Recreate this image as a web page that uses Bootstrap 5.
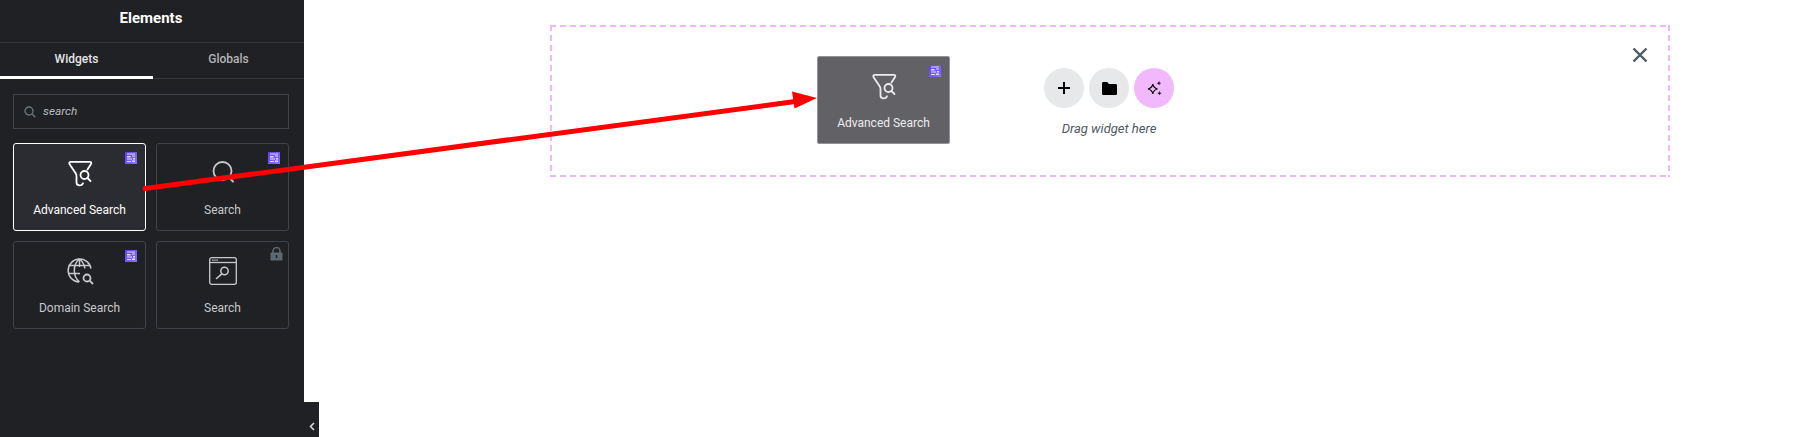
<!DOCTYPE html>
<html lang="en">
<head>
<meta charset="utf-8">
<title>Elements</title>
<link href="https://cdn.jsdelivr.net/npm/bootstrap@5.3.0/dist/css/bootstrap.min.css" rel="stylesheet">
<style>
html,body{height:437px;overflow:hidden;background:#fff}
body{font-family:Roboto,"Liberation Sans",sans-serif;position:relative}
.side{width:304px;height:437px;background:#1f2124;flex:none;position:relative}
.side-title{height:43px;border-bottom:1px solid #33363a;color:#fff;font-size:15px;font-weight:700;line-height:36px;text-align:center;padding-right:2px}
.side-tabs{height:36px;border-bottom:1px solid #33363a}
.side-tab{flex:1 1 0;font-size:12px;font-weight:500;color:#b4b5b7;text-align:center;line-height:32px;height:36px}
.side-tab.on{flex:none;width:153px;color:#e6e6e7;border-bottom:3px solid #fff}
.side-body{padding:15px 15px 0 13px}
.searchbox{height:35px;margin-bottom:-1px;border:1px solid #3f444b;padding-left:10px;gap:7px;color:#babbbd;font-size:11.800px;font-style:italic}
.grid-cards{display:grid;grid-template-columns:133px 133px;gap:10px;margin-top:15px}
.wcard{height:88px;border:1px solid #3f444b;border-radius:3px;color:#c8c9cb;font-size:12px;position:relative;text-align:center;padding-top:15px}
.wcard.sel{border-color:#fff;background:#2b2c31;color:#fff}
.wcard svg.ico{display:block;margin:0 auto}
.wcard .lbl{position:absolute;left:0;right:0;top:58px;line-height:16px}
.prob{position:absolute;top:8px;right:8px;width:12px;height:12px;display:block}
.lockico{position:absolute;top:5px;right:5px}
.fold{position:absolute;left:304px;top:402px;width:15px;height:35px;background:#1f2124}
.fold svg{position:absolute;left:5px;top:20px}
.canvas{flex:1 1 auto;padding:25px 130px 0 246px;position:relative}
.dropzone{width:1120px;height:152px;position:relative;background-image:linear-gradient(90deg,#f0b6fb 6px,transparent 6px),linear-gradient(90deg,#f0b6fb 6px,transparent 6px),linear-gradient(#f0b6fb 6px,transparent 6px),linear-gradient(#f0b6fb 6px,transparent 6px);background-size:10px 2px,10px 2px,2px 10px,2px 10px;background-repeat:repeat-x,repeat-x,repeat-y,repeat-y;background-position:0 0,0 100%,0 0,100% 0;padding:31px 0 0 267px}
.ghost{width:133px;height:88px;flex:none;background:#626166;border:1px solid #96959a;border-radius:2px;color:#ececed;padding-top:15px}
.ghost .lbl{top:58px}
.holder{margin-left:94px;width:130px;padding-top:12px;text-align:center}
.holder-row{gap:5px}
.round{width:40px;height:40px;border-radius:50%;background:#e6e8ea}
.round.pink{background:#f2b8fc}
.hint{font-size:13px;font-style:italic;color:#515962;margin-top:13px;line-height:16px;margin-left:-5px;margin-right:-5px}
.closer{position:absolute;left:1082px;top:22px}
.arrow{position:absolute;left:0;top:0;pointer-events:none}
</style>
</head>
<body>
<svg width="0" height="0" class="position-absolute">
<defs>
<linearGradient id="pg" x1="0" y1="0" x2="1" y2="1"><stop offset="0" stop-color="#5f3df5"/><stop offset="1" stop-color="#8a72ff"/></linearGradient>
<symbol id="probadge" viewBox="0 0 12 12">
<rect width="12" height="12" fill="url(#pg)"/>
<path d="M2 1.500h8v1H2zM2 4h3.500v1.500H2zM7 3.500h3v1H7zM2 6.500h5v1H2zM8 6h2v1.500H8zM2 9h4v1H2zM7 8.500h3v1.500H7z" fill="#e4deff"/>
</symbol>
<symbol id="funnel" viewBox="0 0 26 28">
<path d="M20.500 10.500L24 5c.7-1.200.2-2.200-1.200-2.200H4C2.500 2.800 1.800 4 2.600 5.200L8.500 14c.7 1 1 2 1 3v6.500c0 3.500 5 3.800 6.500.8" fill="none" stroke="currentColor" stroke-width="1.800" stroke-linecap="round"/>
<circle cx="17.500" cy="16" r="4" fill="none" stroke="currentColor" stroke-width="1.800"/>
<path d="M20.500 19l3 3" stroke="currentColor" stroke-width="1.800" stroke-linecap="round"/>
</symbol>
</defs>
</svg>
<div class="d-flex">
<aside class="side">
<div class="side-title">Elements</div>
<div class="side-tabs d-flex">
<div class="side-tab on">Widgets</div>
<div class="side-tab">Globals</div>
</div>
<div class="side-body">
<div class="searchbox d-flex align-items-center">
<svg width="12" height="12" viewBox="0 0 12 12" fill="none" stroke="#6d7882" stroke-width="1.300"><circle cx="5" cy="5" r="4"/><path d="M8 8l3.300 3.300"/></svg>
<span>search</span>
</div>
<div class="grid-cards">
<div class="wcard sel">
<svg class="prob"><use href="#probadge"/></svg>
<svg class="ico" width="26" height="28" viewBox="0 0 26 28"><use href="#funnel"/></svg>
<div class="lbl">Advanced Search</div>
</div>
<div class="wcard">
<svg class="prob"><use href="#probadge"/></svg>
<svg class="ico" width="26" height="28" viewBox="0 0 26 28" fill="none" stroke="currentColor" stroke-width="1.800"><circle cx="12.500" cy="12" r="9"/><path d="M19 18.500l4 4" stroke-linecap="round"/></svg>
<div class="lbl">Search</div>
</div>
<div class="wcard">
<svg class="prob"><use href="#probadge"/></svg>
<svg class="ico" width="28" height="28" viewBox="0 0 28 28" fill="none" stroke="currentColor" stroke-width="1.500"><path d="M25 11.500A11.500 11.500 0 1 0 13 25"/><path d="M2.500 8.500H24M2 16.500H14"/><path d="M13.500 2c-3.500 2.800-5.200 6.500-5.200 11.500s1.700 8.500 5.200 11.500M13.500 2c3 2.600 5 5.500 5.300 9.500M13.500 2v8"/><circle cx="21" cy="21" r="3.500" stroke-width="1.800"/><path d="M23.700 23.700l2.800 2.800" stroke-width="1.800" stroke-linecap="round"/></svg>
<div class="lbl">Domain Search</div>
</div>
<div class="wcard">
<svg class="lockico" width="13" height="14" viewBox="0 0 13 14"><path d="M3 6V4a3.500 3.500 0 0 1 7 0v2" fill="none" stroke="#5f6771" stroke-width="1.600"/><rect x="0.500" y="5.500" width="12" height="8" rx="1" fill="#5f6771"/><rect x="5.700" y="8" width="1.600" height="3" fill="#1f2124"/></svg>
<svg class="ico" width="28" height="28" viewBox="0 0 28 28" fill="none" stroke="currentColor" stroke-width="1.300"><rect x="0.700" y="0.700" width="26.600" height="26.600" rx="2"/><path d="M1 5.500h26"/><path d="M3 3.200h6" stroke-dasharray="1.500 .7" stroke-width="1.200"/><circle cx="15.500" cy="14" r="3.700" stroke-width="1.500"/><path d="M12.800 16.800L7.500 21.500" stroke-width="1.600" stroke-linecap="round"/></svg>
<div class="lbl">Search</div>
</div>
</div>
</div>
</aside>
<main class="canvas">
<div class="dropzone d-flex align-items-start">
<div class="wcard ghost">
<svg class="prob"><use href="#probadge"/></svg>
<svg class="ico" width="26" height="28" viewBox="0 0 26 28"><use href="#funnel"/></svg>
<div class="lbl">Advanced Search</div>
</div>
<div class="holder">
<div class="d-flex justify-content-center holder-row">
<div class="round d-flex align-items-center justify-content-center"><svg width="12" height="12" viewBox="0 0 12 12"><path d="M6 0v12M0 6h12" stroke="#000" stroke-width="2"/></svg></div>
<div class="round d-flex align-items-center justify-content-center"><svg width="15" height="13" viewBox="0 0 15 13"><path d="M0 1.500C0 .7.600 0 1.300 0h4l1.500 2h6.900c.7 0 1.300.6 1.300 1.300v8.400c0 .7-.6 1.300-1.300 1.300H1.300C.6 13 0 12.400 0 11.700z" fill="#000"/></svg></div>
<div class="round pink d-flex align-items-center justify-content-center"><svg width="15" height="15" viewBox="0 0 15 15"><path d="M5.800 3.200c.6 3 1.700 4.100 4.700 4.800-3 .6-4.100 1.800-4.700 4.800C5.200 9.800 4 8.600 1 8c3-.7 4.200-1.800 4.800-4.800z" fill="none" stroke="#000" stroke-width="1.100"/><path d="M12 .5c.2 1.200.5 1.500 1.700 1.700-1.200.2-1.500.5-1.700 1.700-.2-1.200-.5-1.500-1.700-1.700 1.200-.2 1.500-.5 1.700-1.700zM12.500 10.500c.2 1.200.5 1.500 1.700 1.700-1.200.2-1.500.5-1.700 1.700-.2-1.200-.5-1.500-1.700-1.700 1.200-.2 1.500-.5 1.700-1.700z" fill="#000" stroke="#000" stroke-width=".4"/></svg></div>
</div>
<div class="hint">Drag widget here</div>
</div>
<svg class="closer" width="16" height="16" viewBox="0 0 16 16"><path d="M1.500 1.500l13 13M14.500 1.500l-13 13" stroke="#4d5a66" stroke-width="2.400"/></svg>
</div>
</main>
</div>
<div class="fold"><svg width="6" height="9" viewBox="0 0 6 9"><path d="M5 1L1.500 4.500 5 8" fill="none" stroke="#d5d8dc" stroke-width="1.600"/></svg></div>
<svg class="arrow" width="1803" height="437" viewBox="0 0 1803 437"><path d="M145 188.500L795 101.500" stroke="#fe0000" stroke-width="5" stroke-linecap="round"/><path d="M817 98L792 91.500 794.500 108.500z" fill="#fe0000"/></svg>
</body>
</html>
